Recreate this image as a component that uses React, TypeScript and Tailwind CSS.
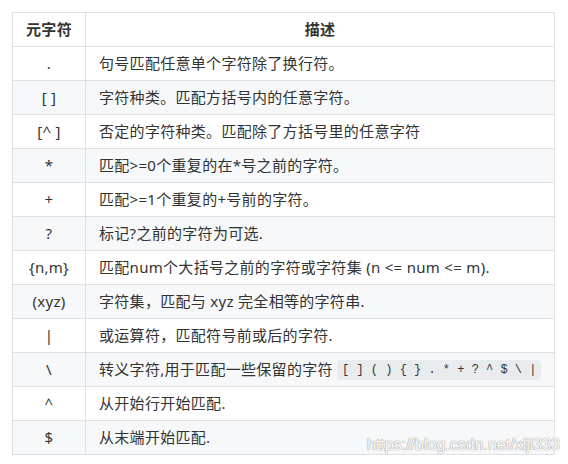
import React from "react";

interface Row {
  sym: string;
  desc: React.ReactNode;
}

const rows: Row[] = [
  { sym: ".", desc: "句号匹配任意单个字符除了换行符。" },
  { sym: "[ ]", desc: "字符种类。匹配方括号内的任意字符。" },
  { sym: "[^ ]", desc: "否定的字符种类。匹配除了方括号里的任意字符" },
  { sym: "*", desc: "匹配>=0个重复的在*号之前的字符。" },
  { sym: "+", desc: "匹配>=1个重复的+号前的字符。" },
  { sym: "?", desc: "标记?之前的字符为可选." },
  { sym: "{n,m}", desc: "匹配num个大括号之前的字符或字符集 (n <= num <= m)." },
  { sym: "(xyz)", desc: "字符集，匹配与 xyz 完全相等的字符串." },
  { sym: "|", desc: "或运算符，匹配符号前或后的字符." },
  {
    sym: "\\",
    desc: (
      <>
        转义字符,用于匹配一些保留的字符{" "}
        <code className="inline-block rounded-[4px] bg-[#e9ecef] px-[5px] py-[3px] align-middle font-['Liberation_Mono',monospace] text-[12px] leading-[14px] tracking-normal">
          {"[ ] ( ) { } . * + ? ^ $ \\ |"}
        </code>
      </>
    ),
  },
  { sym: "^", desc: "从开始行开始匹配." },
  { sym: "$", desc: "从末端开始匹配." },
];

const cell = "h-[34px] border border-[#dfe2e5] px-[13px] py-0 leading-[21px] whitespace-nowrap";

export default function App() {
  return (
    <div className="relative min-h-[464px] bg-white pl-[12px] pt-[12px] font-['Noto_Sans','Noto_Sans_CJK_SC',sans-serif] text-[15px] tracking-[0.3px] text-[#333]">
      <table className="w-[543px] table-fixed border-collapse">
        <colgroup>
          <col className="w-[73px]" />
          <col />
        </colgroup>
        <thead>
          <tr className="bg-white">
            <th className={`${cell} px-0 text-center font-bold`}>元字符</th>
            <th className={`${cell} text-center font-bold`}>描述</th>
          </tr>
        </thead>
        <tbody>
          {rows.map((r, i) => (
            <tr key={i} className={i % 2 === 1 ? "bg-[#f6f8fa]" : "bg-white"}>
              <td className={`${cell} px-0 text-center`}>{r.sym}</td>
              <td className={`${cell} text-left`}>{r.desc}</td>
            </tr>
          ))}
        </tbody>
      </table>

      {/* watermark */}
      <div className="absolute left-[367px] top-[435px] font-['Liberation_Sans',sans-serif] text-[16px] leading-[20px] tracking-normal text-white [text-shadow:0_0_1px_#8a8a8a,0_0_1px_#8a8a8a]">
        https://blog.csdn.net/xiji333
      </div>
    </div>
  );
}
